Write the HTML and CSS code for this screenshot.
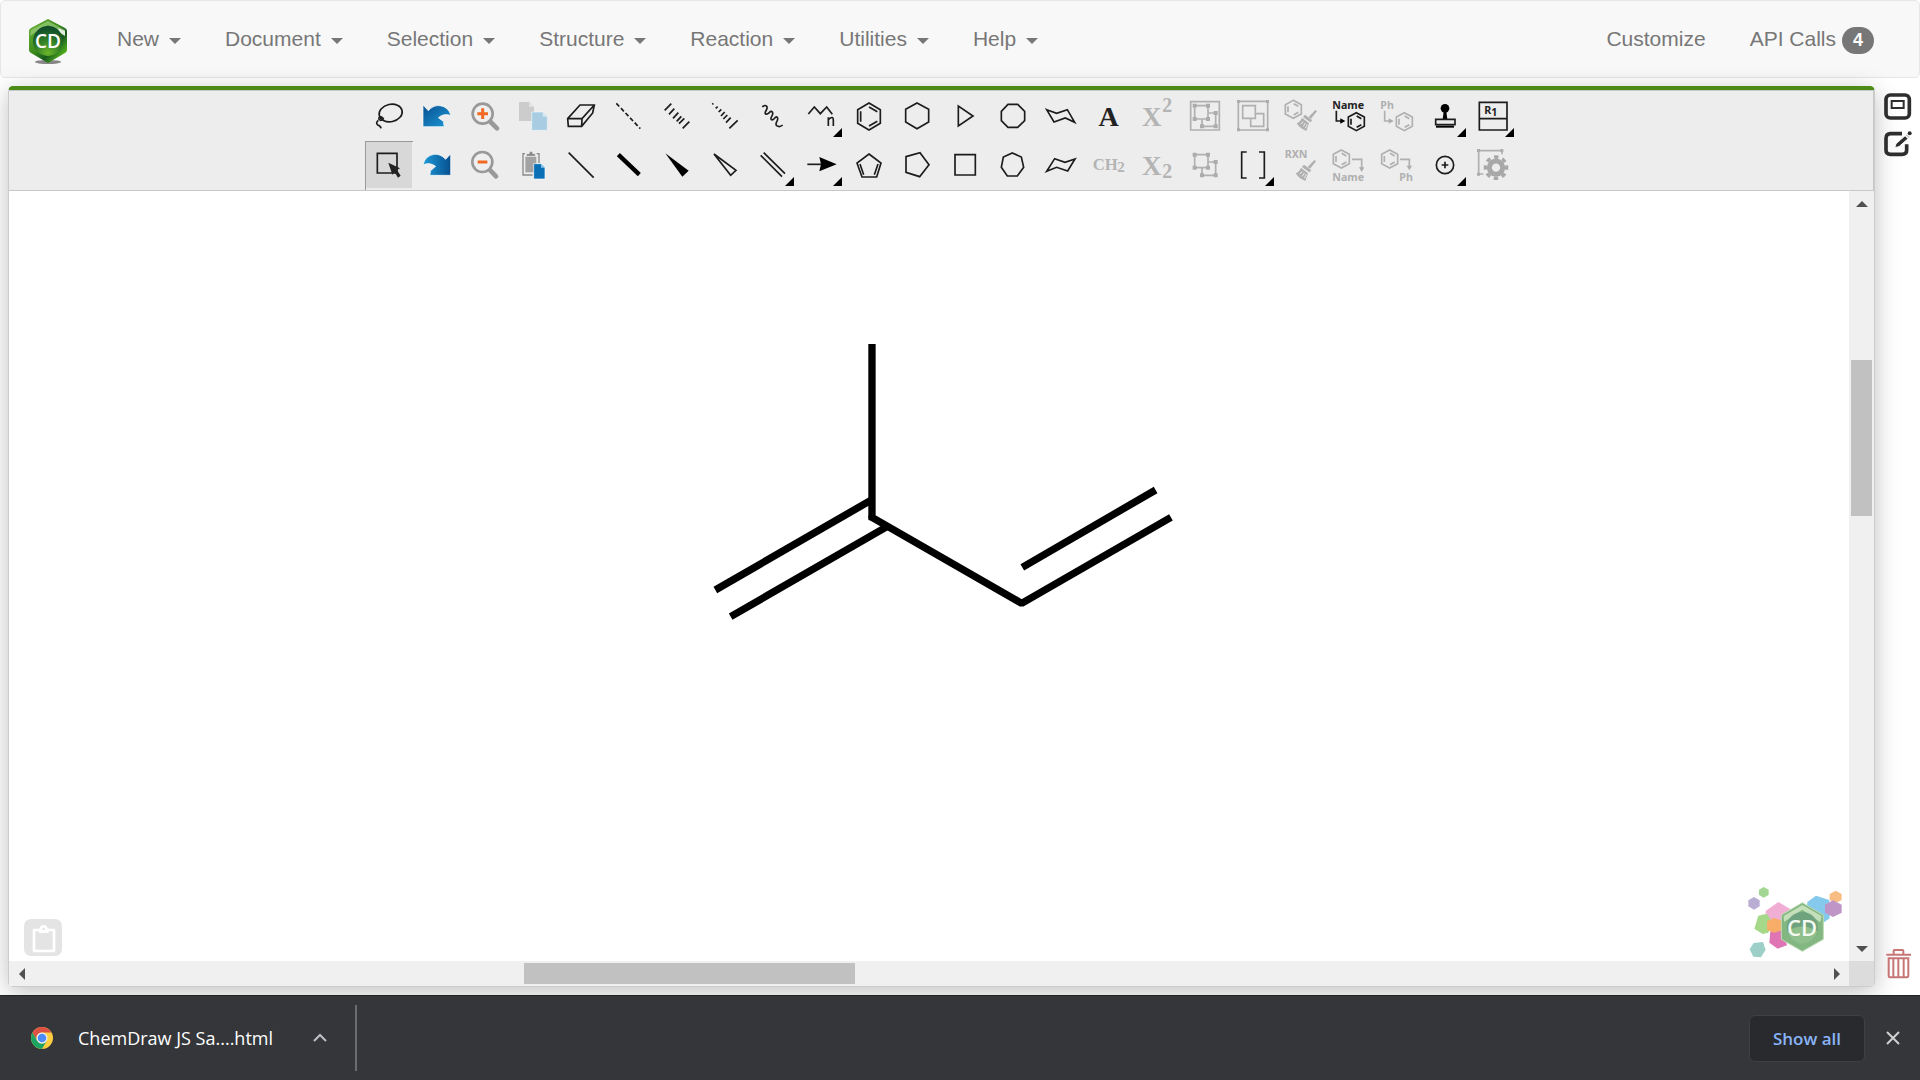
FILE: index.html
```html
<!DOCTYPE html>
<html lang="en">
<head>
<meta charset="utf-8">
<title>ChemDraw JS Sample</title>
<link rel="stylesheet" href="styles.css">
</head>
<body>
<svg class="defs" aria-hidden="true">
  <defs>
    <linearGradient id="blue" x1="0" y1="0" x2="1" y2="1"><stop offset="0" stop-color="#0a4f90"/><stop offset="1" stop-color="#1c9ad8"/></linearGradient>
    <linearGradient id="blueBack" x1="0" y1="0" x2="1" y2="0"><stop offset="0" stop-color="#1c9ad8"/><stop offset="1" stop-color="#07508f"/></linearGradient>
    <linearGradient id="hex" x1="0" y1="0" x2="1" y2="1"><stop offset="0" stop-color="#6fb53a"/><stop offset=".45" stop-color="#3c8a1c"/><stop offset=".65" stop-color="#17591f"/><stop offset=".85" stop-color="#4fae1c"/><stop offset="1" stop-color="#2c7a18"/></linearGradient>
    <radialGradient id="disc" cx=".5" cy=".9" r=".85"><stop offset="0" stop-color="#6cb52a"/><stop offset=".55" stop-color="#2c7a26"/><stop offset="1" stop-color="#0f4a2a"/></radialGradient>
    <g id="benzene">
      <path d="M0-27 24-14V14L0 27-24 14V-14Z"/>
      <path d="M-16-9V9M1-17 15-9M1 17 15 9"/>
    </g>
    <g id="broom" stroke="none" fill="#b0b0b0">
      <path d="M31-34 36-30 18-8 11-13Z"/>
      <path d="M-6-13 0-20 22-3 16 3Z"/>
      <path d="M-9-11 12 6 4 29Q-15 22-25 6-14 2-9-11Z"/>
      <path d="M-13 8-5 1M-5 15 1 5M1 21 7 9" stroke="#ededed" stroke-width="3"/>
    </g>
  </defs>
</svg>

<header class="navbar">
  <a class="brand" href="#" aria-label="ChemDraw">
    <svg width="40" height="46" viewBox="0 0 40 46">
      <ellipse cx="20" cy="44" rx="13" ry="2" fill="#555" opacity=".7"/>
      <path d="M20 1 37 10Q39 11 39 13V32Q39 34 37 35L20 45 3 35Q1 34 1 32V13Q1 11 3 10Z" fill="url(#hex)"/>
      <path d="M3 12 20 3 37 12V17L32 14 20 7 8 14 2 18Z" fill="#a9d78c" opacity=".6"/>
      <path d="M30 10 37 13V18L32 15Z" fill="#fff" opacity=".8"/>
      <circle cx="20" cy="23" r="15" fill="url(#disc)"/>
      <text x="20" y="30" class="logo-text" text-anchor="middle">CD</text>
    </svg>
  </a>
  <nav class="menu">
    <button type="button">New<span class="caret"></span></button>
    <button type="button">Document<span class="caret"></span></button>
    <button type="button">Selection<span class="caret"></span></button>
    <button type="button">Structure<span class="caret"></span></button>
    <button type="button">Reaction<span class="caret"></span></button>
    <button type="button">Utilities<span class="caret"></span></button>
    <button type="button">Help<span class="caret"></span></button>
  </nav>
  <div class="menu menu-right">
    <a href="#">Customize</a>
    <a href="#">API Calls <span class="badge">4</span></a>
  </div>
</header>

<main class="workspace">
  <section class="editor">
    <div class="toolbar">
      <div class="tools" role="toolbar" aria-label="Drawing tools">
        <button aria-label="Lasso"><svg viewBox="45 21 144 147"><g class="ink"><ellipse cx="122" cy="84" rx="35" ry="26" transform="rotate(-12 122 84)"/><path d="M88 95Q98 96 101 103M90 95Q82 102 92 106 102 105 97 98M85 106Q76 113 83 120 92 122 93 130"/></g></svg></button>
        <button aria-label="Undo"><svg viewBox="189 21 144 147"><path d="M219 60 235 77Q250 60 270 62 295 65 303 92 283 83 265 98L281 110Q280 118 283 125H219Z" fill="url(#blue)" stroke="#fff" stroke-width="2"/></svg></button>
        <button aria-label="Zoom in"><svg viewBox="333 21 144 147"><path d="M419 108 441 130" stroke="#999" stroke-width="14" stroke-linecap="round"/><circle cx="398" cy="86" r="30" fill="#efefef" stroke="#999" stroke-width="8"/><path d="M398 70V102M382 86H414" stroke="#f26a21" stroke-width="9"/></svg></button>
        <button aria-label="Copy" disabled><svg viewBox="477 21 144 147"><path d="M507 51H538L552 65V108H507Z" fill="#ccc"/><path d="M538 51V65H552" fill="#e6e6e6"/><path d="M545 81H578L592 95V136H545Z" fill="#a8cde2" stroke="#eef6fa" stroke-width="2"/><path d="M578 81V95H592" fill="#d3e8f3"/></svg></button>
        <button aria-label="Eraser"><svg viewBox="621 21 144 147"><g class="ink"><path d="M653 101 690 60H733L728 84 695 124H655ZM653 101H696L733 60M696 101 695 124"/></g></svg></button>
        <button aria-label="Dashed bond"><svg viewBox="765 21 144 147"><path class="ink" d="M799 55 871 131" stroke-dasharray="13 7"/></svg></button>
        <button aria-label="Hashed bond"><svg viewBox="39 21 144 147"><path class="ink" d="M74 76 94 56M87 88 103 71M99 100 115 83M110 109 124 94M117 116 133 100M128 130 148 110"/></svg></button>
        <button aria-label="Hashed wedge"><svg viewBox="183 21 144 147"><path class="ink" d="M217 58 220 55M227 70 233 65M236 81 244 73M243 93 254 81M250 102 262 90M258 113 272 98M268 130 293 106"/></svg></button>
        <button aria-label="Wavy bond"><svg viewBox="327 21 144 147"><path class="ink" d="M367 66Q375 58 380 64C386 73 370 82 377 87 386 91 391 73 397 81 403 91 388 97 394 104 402 109 406 90 412 97 418 107 402 114 410 122Q419 128 428 120"/></svg></button>
        <button class="more" aria-label="Chain"><svg viewBox="471 21 144 147"><path class="ink" d="M505 87 523 66 541 86 560 66 577 88"/><path class="ink" d="M565 97V123M565 104Q580 90 580 106V123"/></svg></button>
        <button aria-label="Benzene"><svg viewBox="615 21 144 147"><path class="ink" d="M687 54 721 74V115L687 135 653 115V74ZM662 79V110M687 66 712 80M687 123 712 109"/></svg></button>
        <button aria-label="Cyclohexane"><svg viewBox="759 21 144 147"><path class="ink" d="M831 54 866 73V111L831 131 797 111V73Z"/></svg></button>
        <button aria-label="Cyclopropane"><svg viewBox="33 21 144 147"><path class="ink" d="M85 63V123L129 93Z"/></svg></button>
        <button aria-label="Cyclooctane"><svg viewBox="177 21 144 147"><path class="ink" d="M234 58H263L284 79V107L263 127H234L214 107V79Z"/></svg></button>
        <button aria-label="Chair"><svg viewBox="321 21 144 147"><path class="ink" d="M350 74 380 85 412 74 434 112 406 99 372 111Z"/></svg></button>
        <button aria-label="Text"><svg viewBox="465 21 144 147"><text x="536" y="122" class="glyph-a" text-anchor="middle">A</text></svg></button>
        <button aria-label="Superscript" disabled><svg viewBox="609 21 144 147"><text x="636" y="123" class="glyph-x">X</text><text x="697" y="81" class="glyph-n">2</text></svg></button>
        <button aria-label="Group" disabled><svg viewBox="753 21 144 147"><g class="mute"><path d="M782 50H868V135H782Z"/><path d="M794 62H834V102H794ZM834 84H857V124H816V102"/></g><path class="mute-fill" d="M788 56h12v12h-12zM828 56h12v12h-12zM788 96h12v12h-12zM828 96h12v12h-12zM851 78h12v12h-12zM851 118h12v12h-12zM810 118h12v12h-12z"/></svg></button>
        <button aria-label="Join" disabled><svg viewBox="27 21 144 147"><g class="mute"><path d="M55 49H143V135H55Z"/><path d="M68 62H106V100H68ZM106 86H131V124H92V100"/></g><path class="mute-fill" d="M51 45h9v9h-9zM138 45h9v9h-9zM51 130h9v9h-9zM138 130h9v9h-9z"/></svg></button>
        <button aria-label="Clean up structure" disabled><svg viewBox="171 21 144 147"><use href="#benzene" x="220" y="73" class="mute"/><use href="#broom" x="255" y="109"/></svg></button>
        <button aria-label="Name to structure"><svg viewBox="315 21 144 147"><text x="337" y="71" class="label">Name</text><path class="ink" d="M349 77V108H364"/><path d="M361 100 376 108 361 116Z"/><use href="#benzene" x="409" y="110" class="ink"/></svg></button>
        <button aria-label="Ph to ring" disabled><svg viewBox="459 21 144 147"><text x="481" y="71" class="label label-mute">Ph</text><path class="mute" d="M494 77V108H510"/><path class="mute-fill" d="M506 100 521 108 506 116Z"/><use href="#benzene" x="553" y="110" class="mute"/></svg></button>
        <button class="more" aria-label="Templates"><svg viewBox="603 21 144 147"><circle cx="675" cy="70" r="13"/><path d="M671 80H679L682 103H668Z"/><path class="ink" d="M647 103H705V119H647Z"/><path d="M648 122H702V128H648Z"/></svg></button>
        <button class="more" aria-label="R-group table"><svg viewBox="747 21 144 147"><path class="ink" d="M778 52H861V135H778ZM778 101H861"/><text x="793" y="87" class="label">R</text><text x="814" y="94" class="label">1</text></svg></button>

        <button class="selected" aria-label="Select"><svg viewBox="45 168 144 147"><path class="ink" d="M82 205H141V264H82Z"/><path d="M115 233 150 250 141 255 152 272 144 278 134 262 127 269Z" fill="#222"/></svg></button>
        <button aria-label="Redo"><svg viewBox="189 168 144 147"><path d="M302 207 287 223Q271 206 252 208 226 212 219 240 239 230 257 244L241 258Q242 265 239 271H302Z" fill="url(#blueBack)" stroke="#fff" stroke-width="2"/></svg></button>
        <button aria-label="Zoom out"><svg viewBox="333 168 144 147"><path d="M417 252 438 274" stroke="#999" stroke-width="14" stroke-linecap="round"/><circle cx="397" cy="231" r="30" fill="#efefef" stroke="#999" stroke-width="8"/><path d="M383 231H412" stroke="#f26a21" stroke-width="9"/></svg></button>
        <button aria-label="Paste"><svg viewBox="477 168 144 147"><path d="M525 206H519V270H548M560 206H567V234" fill="none" stroke="#8a8a8a" stroke-width="4"/><path d="M526 215H559V262H526Z" fill="#a3a3a3"/><path d="M529 214V206H537Q537 199 543 199T549 206H556V214Z" fill="#8a8a8a" stroke="#eee" stroke-width="2"/><path d="M551 236H573L585 248V282H551Z" fill="#0a6fb5" stroke="#fff" stroke-width="2"/><path d="M573 236V248H585" fill="#8dc6ea"/></svg></button>
        <button aria-label="Solid bond"><svg viewBox="621 168 144 147"><path class="ink" d="M656 203 731 278"/></svg></button>
        <button aria-label="Bold bond"><svg viewBox="765 168 144 147"><path d="M805 209 868 269" stroke="#000" stroke-width="13"/></svg></button>
        <button aria-label="Wedge bond"><svg viewBox="39 168 144 147"><path d="M76 205 146 257 127 275Z"/></svg></button>
        <button aria-label="Hollow wedge"><svg viewBox="183 168 144 147"><path class="ink" d="M222 207 288 256 272 271Z"/></svg></button>
        <button class="more" aria-label="Double bond"><svg viewBox="327 168 144 147"><path class="ink" d="M362 211 426 275M371 203 435 266"/></svg></button>
        <button class="more" aria-label="Arrow"><svg viewBox="471 168 144 147"><path class="ink" d="M502 238H550"/><path d="M538 216 590 238 538 259 543 238Z"/></svg></button>
        <button aria-label="Cyclopentadiene"><svg viewBox="615 168 144 147"><path class="ink" d="M687 207 723 234 710 276H666L651 234ZM660 237 671 269M714 237 703 269"/></svg></button>
        <button aria-label="Cyclopentane"><svg viewBox="759 168 144 147"><path class="ink" d="M798 215 840 203 867 239 839 275 798 262Z"/></svg></button>
        <button aria-label="Cyclobutane"><svg viewBox="33 168 144 147"><path class="ink" d="M75 209H136V270H75Z"/></svg></button>
        <button aria-label="Cycloheptane"><svg viewBox="177 168 144 147"><path class="ink" d="M247 204 274 216 281 247 262 273H232L214 247 220 216Z"/></svg></button>
        <button aria-label="Chair, flipped"><svg viewBox="321 168 144 147"><path class="ink" d="M374 221 405 232 435 222 413 258 380 247 350 259Z"/></svg></button>
        <button aria-label="CH2" disabled><svg viewBox="465 168 144 147"><text x="488" y="256" class="glyph-ch">CH</text><text x="562" y="261" class="glyph-n2">2</text></svg></button>
        <button aria-label="Subscript" disabled><svg viewBox="609 168 144 147"><text x="636" y="271" class="glyph-x">X</text><text x="697" y="278" class="glyph-n">2</text></svg></button>
        <button aria-label="Ungroup" disabled><svg viewBox="753 168 144 147"><path class="mute" d="M794 209H834V248H794ZM834 231H857V271H816V248"/><path class="mute-fill" d="M788 203h12v12h-12zM828 203h12v12h-12zM788 242h12v12h-12zM828 242h12v12h-12zM851 225h12v12h-12zM851 265h12v12h-12zM810 265h12v12h-12z"/></svg></button>
        <button class="more" aria-label="Brackets"><svg viewBox="27 168 144 147"><path class="ink" d="M80 201H65V279H80M117 201H133V279H117"/></svg></button>
        <button aria-label="Clean up reaction" disabled><svg viewBox="171 168 144 147"><text x="194" y="218" class="label label-mute">RXN</text><use href="#broom" x="252" y="259"/></svg></button>
        <button aria-label="Structure to name" disabled><svg viewBox="315 168 144 147"><use href="#benzene" x="364" y="222" class="mute"/><path class="mute" d="M396 223H425V250"/><path class="mute-fill" d="M417 247H433L425 261Z"/><text x="337" y="287" class="label label-mute">Name</text></svg></button>
        <button aria-label="Ring to Ph" disabled><svg viewBox="459 168 144 147"><use href="#benzene" x="509" y="222" class="mute"/><path class="mute" d="M540 223H568V246"/><path class="mute-fill" d="M560 242H576L568 256Z"/><text x="538" y="287" class="label label-mute">Ph</text></svg></button>
        <button class="more" aria-label="Charge"><svg viewBox="603 168 144 147"><circle class="ink" cx="675" cy="240" r="26"/><path class="ink" d="M675 230V250M665 240H685"/></svg></button>
        <button aria-label="Settings" disabled><svg viewBox="747 168 144 147"><path class="mute" d="M790 267H776V197H846V208"/><path class="mute-fill" d="M771 192h9v9h-9zM841 192h9v9h-9zM771 263h9v9h-9z"/><g fill="none" stroke="#a8a8a8"><circle cx="828" cy="248" r="20" stroke-width="15"/><circle cx="828" cy="248" r="32" stroke-width="10" stroke-dasharray="13 12.130" transform="rotate(-12 828 248)"/></g></svg></button>
      </div>
    </div>

    <div class="stage">
      <div class="canvas">
        <svg class="molecule" viewBox="9 191 1840 770" role="img" aria-label="Isoprene structure">
          <g transform="translate(680 320) scale(.3333)" fill="none" stroke="#000" stroke-width="22">
            <path d="M576 72V592L1025 850 1473 592" stroke-linejoin="bevel"/>
            <path d="M565 586V600L582 604" stroke="none" fill="#000"/>
            <path d="M1027 742 1427 510M106 810 576 539M152 890 621 620"/>
          </g>
        </svg>
        <button class="clip" aria-label="Clipboard">
          <svg width="38" height="37" viewBox="0 0 114 111"><path d="M30 33H90V96H30Z" fill="none" stroke="#fff" stroke-width="8" stroke-linejoin="round"/><path d="M45 29H74V42H45Z" fill="#fff"/><circle cx="59" cy="30" r="8" fill="#e4e4e4" stroke="#fff" stroke-width="8"/></svg>
        </button>
        <svg class="watermark" width="96" height="74" viewBox="84 48 288 222" aria-hidden="true">
          <path fill="#a3d693" d="M134 51 149 59V75L134 83 120 75V59Z"/>
          <path fill="#b9add3" d="M105 81 122 91V109L105 119 88 109V91Z"/>
          <path fill="#9dcfc9" d="M104 219 132 216 140 239 126 262 103 260 92 238Z"/>
          <path fill="#f0aed5" d="M178 96 214 117V155L178 174 140 155V123Z"/>
          <path fill="#a5d989" d="M118 137 143 131 160 155 148 188 131 192 106 176Z"/>
          <path fill="#85c9ec" d="M291 77 331 90 332 145 312 159 263 140 265 96Z"/>
          <path fill="#f8bd83" d="M350 62 368 72V90L350 99 332 90V72Z"/>
          <path fill="#bf94c6" d="M342 91 368 104V128L342 141 318 128V104Z"/>
          <path fill="#df76b3" d="M154 184 190 178 204 226 176 236 151 218Z"/>
          <path fill="#f7ad68" d="M165 144 190 152V180L166 188 144 180V154Z"/>
          <path fill="#83b781" stroke="#bfdcb4" stroke-width="3" d="M250 98 313 135V208L250 244 187 208V135Z"/>
          <path fill="#d9edcf" opacity=".75" d="M194 138 250 105 308 138 304 157 250 119 195 156Z"/>
          <circle cx="250" cy="173" r="47" fill="#6fa27f"/><path d="M204 184Q250 155 296 184 285 219 250 221 215 219 204 184" fill="#8fc08b"/>
          <text x="249" y="197" class="watermark-text" text-anchor="middle">CD</text>
        </svg>
      </div>
      <div class="scroll scroll-y" aria-hidden="true">
        <i class="arrow up"></i><div class="gap" style="flex-grow:144"></div><div class="thumb" style="flex-grow:156"></div><div class="gap" style="flex-grow:420"></div><i class="arrow down"></i>
      </div>
      <div class="scroll scroll-x" aria-hidden="true">
        <i class="arrow left"></i><div class="gap" style="flex-grow:490"></div><div class="thumb" style="flex-grow:331"></div><div class="gap" style="flex-grow:969"></div><i class="arrow right"></i>
      </div>
      <div class="corner"></div>
    </div>
  </section>

  <aside class="rail">
    <button aria-label="Window view"><svg width="28" height="27" viewBox="0 0 84 81" fill="none" stroke="#2e2e2e"><rect x="6" y="6" width="70" height="69" rx="13" stroke-width="11"/><rect x="23" y="24" width="36" height="21" stroke-width="6"/></svg></button>
    <button aria-label="Edit"><svg width="28" height="27" viewBox="0 0 84 81"><path d="M54 8H20Q6 8 6 22V57Q6 70 20 70H54Q68 70 68 57V40" fill="none" stroke="#2e2e2e" stroke-width="11"/><path d="M68 10 77 19 45 47 32 50 36 38Z" fill="#2e2e2e" stroke="#fff" stroke-width="3"/><path d="M61 10 77 25" stroke="#fff" stroke-width="5"/><circle cx="77" cy="7" r="6" fill="#2e2e2e"/></svg></button>
    <button class="trash" aria-label="Delete"><svg width="26" height="30" viewBox="0 0 78 90" fill="none" stroke="#c77676" stroke-width="6"><path d="M1 17H75M23 15V5Q23 3 25 3H49Q52 3 52 5V15M8 28H67V81Q67 85 63 85H12Q8 85 8 81ZM22 30V83M37 30V83M53 30V83"/></svg></button>
  </aside>
</main>

<footer class="downloads">
  <button class="file">
    <svg width="24" height="24" viewBox="-12 -12 24 24"><circle r="11" fill="#ffcd40"/><path d="M-9.500-5.500A11 11 0 0 1 9.500-5.500H0A5.500 5.500 0 0 0-4.800 2.700Z" fill="#dd5144"/><path d="M-9.500-5.500A11 11 0 0 0 0 11L4.800 2.700A5.500 5.500 0 0 1-4.800 2.700Z" fill="#1da362"/><circle r="5.500" fill="#f1f1f1"/><circle r="4.300" fill="#4c8bf5"/></svg>
    <span>ChemDraw JS Sa....html</span>
  </button>
  <button class="expand" aria-label="File menu"><svg width="14" height="10" viewBox="0 0 14 10"><path d="M1 8 7 2 13 8" fill="none" stroke="#bdc1c6" stroke-width="2"/></svg></button>
  <button class="show-all">Show all</button>
  <button class="close" aria-label="Close"><svg width="16" height="16" viewBox="0 0 16 16"><path d="M2 2 14 14M14 2 2 14" stroke="#d0d0d0" stroke-width="2"/></svg></button>
</footer>
</body>
</html>
```
FILE: styles.css
```css
* { box-sizing: border-box; }

body {
  margin: 0;
  min-height: 100vh;
  display: flex;
  flex-direction: column;
  background: #fff;
  font-family: "Liberation Sans", Arial, sans-serif;
}

button {
  margin: 0;
  padding: 0;
  border: 0;
  background: none;
  font: inherit;
  color: inherit;
}

svg { display: block; }

.defs { position: absolute; width: 0; height: 0; }

/* top navigation */
.navbar {
  height: 78px;
  display: flex;
  align-items: center;
  padding: 0 45px 0 27px;
  background: #f8f8f8;
  border: 1px solid #e7e7e7;
  border-radius: 5px;
  color: #777;
  font-size: 21px;
  line-height: 30px;
}

.brand { margin: 4px 49px 0 0; }

.logo-text {
  font: 600 19px "Open Sans", sans-serif;
  fill: #fff;
}

.menu { display: flex; gap: 44px; }
.menu button { display: flex; align-items: center; }
.menu a { display: flex; align-items: center; gap: 6px; color: inherit; text-decoration: none; }
.menu-right { margin-left: auto; }

.caret {
  margin: 4px 0 0 10px;
  border: 6px solid transparent;
  border-top-color: #777;
  border-bottom: 0;
}

.badge {
  min-width: 32px;
  margin-top: 2px;
  border-radius: 14px;
  background: #777;
  color: #fff;
  font-size: 18px;
  font-weight: bold;
  line-height: 27px;
  text-align: center;
}

/* editor frame */
.workspace {
  flex: 1;
  display: flex;
  padding: 8px 0 8px 8px;
  min-height: 0;
}

.editor {
  flex: 1;
  min-width: 0;
  display: flex;
  flex-direction: column;
  border: 1px solid #ccc;
  border-top: 4px solid #4a8c16;
  border-radius: 5px;
  box-shadow: 0 5px 24px rgba(0, 0, 0, .25);
  background: #fff;
}

.toolbar {
  padding: 1px 0 0;
  border: 1px solid #c8c8c8;
  border-left: 0;
  background: #ededed;
}

.tools {
  display: grid;
  grid-template-columns: repeat(24, 48px);
  justify-content: center;
}

.tools button { position: relative; height: 49px; }
.tools button svg { width: 48px; height: 49px; }

.tools .selected {
  background: #d8d8d8;
  box-shadow: inset 1px 1px #999, inset -1px -2px #ededed;
}

.more::after {
  content: "";
  position: absolute;
  right: 3px;
  bottom: 4px;
  border: solid #000;
  border-width: 0 0 9px 9px;
  border-left-color: transparent;
}

.ink { fill: none; stroke: #1c1c1c; stroke-width: 5; }
.mute { fill: none; stroke: #b0b0b0; stroke-width: 5; }
.mute-fill { fill: #acacac; }

.label { font: bold 32px "Noto Sans", sans-serif; fill: #222; }
.label-mute { fill: #b0b0b0; }
.glyph-a { font: bold 84px "Liberation Serif", serif; fill: #222; }
.glyph-x { font: bold 81px "Liberation Serif", serif; fill: #b4b4b4; }
.glyph-n { font: bold 60px "Liberation Serif", serif; fill: #b4b4b4; }
.glyph-ch { font: bold 50px "Liberation Serif", serif; fill: #b4b4b4; }
.glyph-n2 { font: bold 45px "Liberation Serif", serif; fill: #b4b4b4; }

/* drawing area with its scrollbars */
.stage {
  flex: 1;
  display: grid;
  grid-template-columns: 1fr 25px;
  grid-template-rows: 1fr 25px;
}

.canvas { position: relative; min-height: 400px; }
.molecule { position: absolute; width: 100%; height: 100%; }

.clip {
  position: absolute;
  left: 15px;
  bottom: 5px;
  border-radius: 7px;
  background: #e4e4e4;
}

.watermark { position: absolute; right: 6px; bottom: 1px; }
.watermark-text { font: 600 66px "Open Sans", sans-serif; fill: #f4f9f2; }

.scroll { display: flex; background: #f0f0f0; }
.scroll-y { flex-direction: column; }
.thumb { background: #c1c1c1; }
.scroll-y .thumb { margin: 0 2px; }
.scroll-x .thumb { margin: 2px 0; }
.corner { background: #dcdcdc; }

.arrow {
  flex: 0 0 25px;
  display: grid;
  place-items: center;
}

.arrow::before { content: ""; border: 6px solid transparent; }
.up::before { border-top: 0; border-bottom-color: #505050; }
.down::before { border-bottom: 0; border-top-color: #505050; }
.left::before { border-left: 0; border-right-color: #505050; }
.right::before { border-right: 0; border-left-color: #505050; }

/* side actions */
.rail {
  width: 45px;
  display: flex;
  flex-direction: column;
  align-items: flex-start;
  gap: 11px;
  padding: 7px 0 8px 9px;
}

.trash { margin: auto 0 0 2px; }

/* browser download shelf */
.downloads {
  height: 85px;
  display: flex;
  align-items: center;
  padding: 0 19px 0 30px;
  border-top: 1px solid #222326;
  background: #35363a;
  color: #fff;
  font-family: "Open Sans", "Noto Sans", sans-serif;
  font-size: 18px;
}

.file { display: flex; align-items: center; gap: 24px; }

.expand {
  height: 66px;
  margin-right: auto;
  margin-left: 40px;
  padding-right: 28px;
  border-right: 2px solid #6b6c6f;
}

.show-all {
  width: 116px;
  height: 47px;
  margin-right: 20px;
  border: 1px solid #3f4043;
  border-radius: 6px;
  background: #292a2d;
  color: #8ab4f8;
  font-size: 17px;
  font-weight: 600;
}
```
